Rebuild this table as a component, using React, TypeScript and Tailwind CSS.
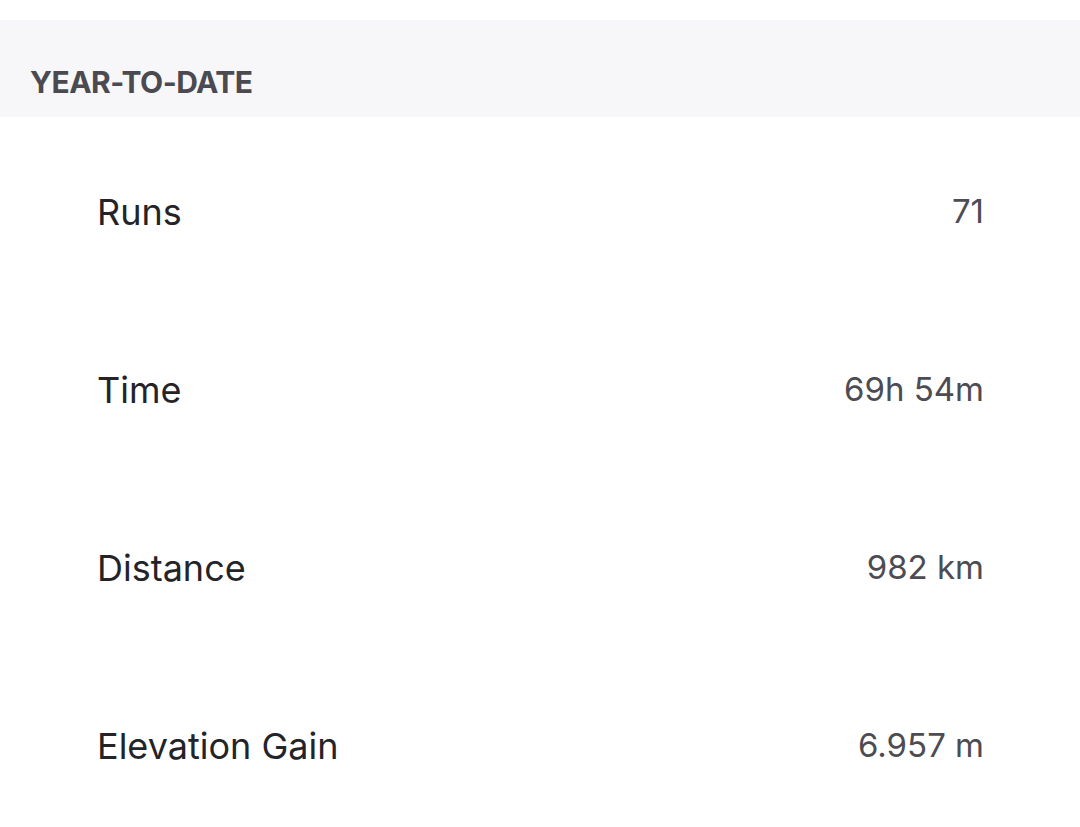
import React from "react";

const rows = [
  { label: "Runs", value: "71" },
  { label: "Time", value: "69h 54m" },
  { label: "Distance", value: "982 km" },
  { label: "Elevation Gain", value: "6.957 m" },
];

export default function App() {
  return (
    <div
      className="w-[1080px] h-[827px] overflow-hidden bg-white"
      style={{ fontFamily: 'Inter, "Liberation Sans", Arial, sans-serif' }}
    >
      <div className="h-[20px]" />
      <div className="h-[97px] bg-[#f7f7f9] flex items-end pl-[30px] pb-[20px]">
        <span className="text-[30px] leading-none font-bold tracking-[-0.5px] text-[#4a4a50]">
          YEAR-TO-DATE
        </span>
      </div>
      <div className="pt-[6px] flex flex-col">
        {rows.map((r) => (
          <div
            key={r.label}
            className="h-[178px] shrink-0 flex items-center justify-between pl-[97px] pr-[96px]"
          >
            <span className="text-[36px] leading-none text-[#242428]">{r.label}</span>
            <span className="text-[33px] leading-none text-[#4c4c52] -translate-y-[1px]">
              {r.value}
            </span>
          </div>
        ))}
      </div>
    </div>
  );
}
